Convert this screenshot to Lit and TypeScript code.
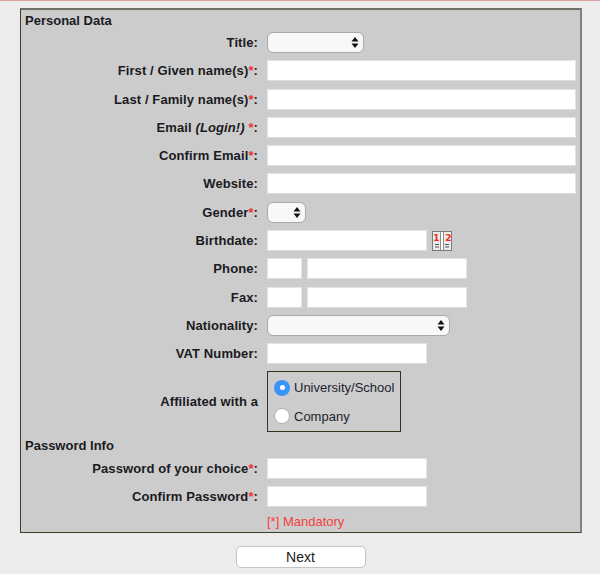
import { LitElement, html, css, svg } from "lit";
import { customElement } from "lit/decorators.js";

const updown = svg`<svg width="8" height="13" viewBox="0 0 8 13"><path d="M4 1 7.5 5.5H.5Z M4 12 .5 7.5H7.5Z" fill="#111"/></svg>`;

@customElement("app-root")
export class AppRoot extends LitElement {
  static styles = css`
    :host { display: block; width: 600px; height: 574px; background: #ececec; font-family: "Liberation Sans", Arial, sans-serif; font-size: 13px; color: #1a1a1f; overflow: hidden; }
    .topline { height: 1px; background: #dda0a0; }
    .wrap { padding: 7px 18px 0 20px; }
    .panel { background: #cccccc; border: 1px solid #3c3c28; border-right: 2px solid #7f8278; border-top: 2px solid #6f7268; padding: 3px 0 3px 4px; height: 525px; box-sizing: border-box; }
    .section { font-weight: bold; line-height: 15px; height: 15px; }
    .section.pw { margin-top: 6px; }
    .form { display: grid; grid-template-columns: 233px 309px; column-gap: 9px; row-gap: 7.3px; margin-top: 4px; }
    .form.second { margin-top: 5.5px; }
    .form.foot { margin-top: 6.5px; }
    .label { font-weight: bold; text-align: right; height: 21px; line-height: 22px; letter-spacing: 0.1px; white-space: nowrap; }
    .req { color: #f03030; }
    .field { display: flex; gap: 5px; align-items: center; height: 21px; }
    .in { background: #fff; height: 21px; box-sizing: border-box; border: 1px solid #e4e4e4; border-bottom-color: #dcdcdc; }
    .full { width: 309px; }
    .mid { width: 160px; }
    .cc { width: 35px; }
    .sel { height: 21px; box-sizing: border-box; background: #f8f8f8; border: 1px solid #a9a9a9; border-radius: 6px; display: flex; align-items: center; justify-content: flex-end; padding-right: 4px; }
    .sel.title { width: 97px; }
    .sel.gender { width: 39px; }
    .sel.nat { width: 183px; }
    .label.affil { height: 60px; line-height: 60px; }
    .box { border: 1px solid #333320; width: 134px; height: 61px; margin-top: -1px; box-sizing: border-box; padding: 8px 0 0 6px; display: flex; flex-direction: column; gap: 12.5px; }
    .radio { display: flex; align-items: center; gap: 4px; height: 16px; color: #23232e; white-space: nowrap; }
    .dot { width: 16px; height: 16px; border-radius: 50%; box-sizing: border-box; background: #fff; border: 1px solid #b0b0b0; display: flex; align-items: center; justify-content: center; flex: none; }
    .dot.on { background: #3c94f8; border: none; }
    .dot.on::after { content: ""; width: 5px; height: 5px; background: #fff; border-radius: 50%; }
    .mand { grid-column: 2; color: #f44040; line-height: 15px; }
    .cal { flex: none; }
    .actions { display: flex; justify-content: center; margin-top: 13px; }
    .next { width: 130px; height: 22px; box-sizing: border-box; background: #fff; border: 1px solid #c4c4c4; border-radius: 5px; font: 14px "Liberation Sans", Arial, sans-serif; color: #1a1a1a; padding: 0; text-align: center; line-height: 20px; margin-right: 1px; }
  `;

  private row(label: unknown, field: unknown) {
    return html`<div class="label">${label}</div><div class="field">${field}</div>`;
  }

  render() {
    const star = html`<span class="req">*</span>`;
    return html`
      <div class="topline"></div>
      <div class="wrap">
        <div class="panel">
          <div class="section">Personal Data</div>
          <div class="form">
            ${this.row("Title:", html`<div class="sel title">${updown}</div>`)}
            ${this.row(html`First / Given name(s)${star}:`, html`<div class="in full"></div>`)}
            ${this.row(html`Last / Family name(s)${star}:`, html`<div class="in full"></div>`)}
            ${this.row(html`Email <i>(Login!)</i> ${star}:`, html`<div class="in full"></div>`)}
            ${this.row(html`Confirm Email${star}:`, html`<div class="in full"></div>`)}
            ${this.row("Website:", html`<div class="in full"></div>`)}
            ${this.row(html`Gender${star}:`, html`<div class="sel gender">${updown}</div>`)}
            ${this.row("Birthdate:", html`<div class="in mid"></div>
              <svg class="cal" width="20" height="20" viewBox="0 0 20 20">
                <rect x=".5" y=".5" width="19" height="19" fill="#ececec" stroke="#7a7a7a"/>
                <rect x="8" y="1" width="4" height="18" fill="#fff"/>
                <path d="M8.5 1V19M11.5 1V19" stroke="#8c8c8c"/>
                <path d="M3 13.5H7M3 16H7M13 13.5H17M13 16H17" stroke="#555"/>
                <text x="1" y="10" font-family="DejaVu Sans" font-weight="bold" font-size="9.5" fill="#f03020">1</text>
                <text x="13" y="10" font-family="DejaVu Sans" font-weight="bold" font-size="9.5" fill="#f03020">2</text>
              </svg>`)}
            ${this.row("Phone:", html`<div class="in cc"></div><div class="in mid"></div>`)}
            ${this.row("Fax:", html`<div class="in cc"></div><div class="in mid"></div>`)}
            ${this.row("Nationality:", html`<div class="sel nat">${updown}</div>`)}
            ${this.row("VAT Number:", html`<div class="in mid"></div>`)}
            <div class="label affil">Affiliated with a</div>
            <div class="box">
              <div class="radio"><span class="dot on"></span>University/School</div>
              <div class="radio"><span class="dot"></span>Company</div>
            </div>
          </div>
          <div class="section pw">Password Info</div>
          <div class="form second">
            ${this.row(html`Password of your choice${star}:`, html`<div class="in mid"></div>`)}
            ${this.row(html`Confirm Password${star}:`, html`<div class="in mid"></div>`)}
          </div>
          <div class="form foot"><div class="mand">[*] Mandatory</div></div>
        </div>
        <div class="actions"><button class="next">Next</button></div>
      </div>
    `;
  }
}
